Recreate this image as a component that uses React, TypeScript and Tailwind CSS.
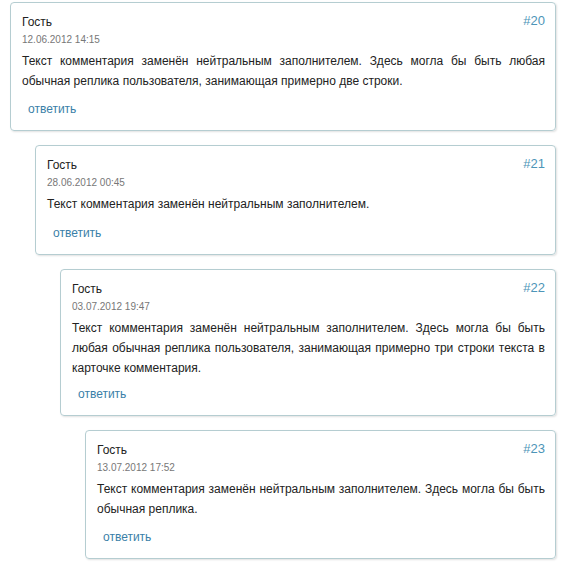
const COMMENTS = [
  {
    num: 20,
    date: '12.06.2012 14:15',
    text: 'Текст комментария заменён нейтральным заполнителем. Здесь могла бы быть любая обычная реплика пользователя, занимающая примерно две строки.',
    h: 'h-[129px]',
  },
  {
    num: 21,
    date: '28.06.2012 00:45',
    text: 'Текст комментария заменён нейтральным заполнителем.',
    h: 'h-[110px]',
  },
  {
    num: 22,
    date: '03.07.2012 19:47',
    text: 'Текст комментария заменён нейтральным заполнителем. Здесь могла бы быть любая обычная реплика пользователя, занимающая примерно три строки текста в карточке комментария.',
    h: 'h-[147px]',
  },
  {
    num: 23,
    date: '13.07.2012 17:52',
    text: 'Текст комментария заменён нейтральным заполнителем. Здесь могла бы быть обычная реплика.',
    h: 'h-[129px]',
  },
];

const INDENT = ['ml-[10px]', 'ml-[35px]', 'ml-[60px]', 'ml-[85px]'];

export default function App() {
  return (
    <div className="w-[567px] h-[563px] bg-white pt-[2px] font-['Liberation_Sans',Arial,sans-serif] flex flex-col gap-[14px]">
      {COMMENTS.map((c, i) => (
        <div
          key={c.num}
          className={`${INDENT[i]} mr-[11px] ${c.h} border border-[#b5cdd1] rounded-[4px] shadow-[1px_1px_2px_rgba(0,0,0,0.12)] pl-[11px] pr-[10px] pt-[10px] flex flex-col`}
        >
          <div className="flex justify-between items-start">
            <span className="text-[12px] text-[#222]">Гость</span>
            <span className="text-[13px] text-[#4d95b8] -mt-[2px]">#{c.num}</span>
          </div>
          <div className="text-[10px] text-[#777] mt-[1px]">{c.date}</div>
          <p className="text-[12px] leading-[20px] text-[#222] mt-[4px] text-justify">{c.text}</p>
          <div className="mt-auto mb-[12px] ml-[6px] text-[12px] text-[#3a7fa8]">ответить</div>
        </div>
      ))}
    </div>
  );
}
